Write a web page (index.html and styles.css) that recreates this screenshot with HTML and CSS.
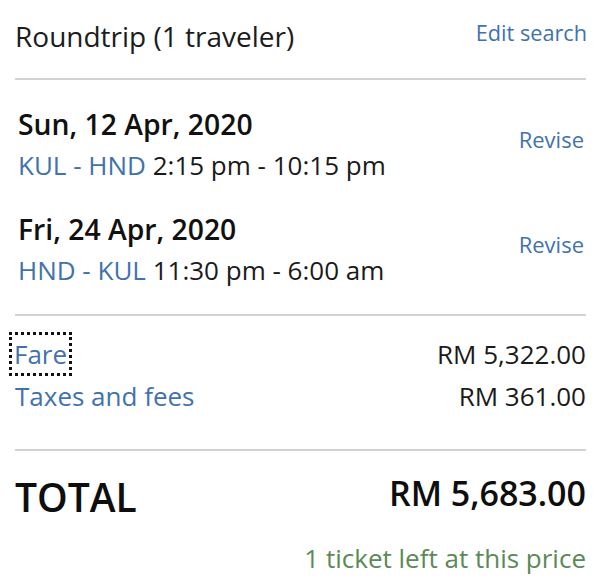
FILE: index.html
```html
<!DOCTYPE html>
<html lang="en">
<head>
<meta charset="utf-8">
<title>Trip summary</title>
<link rel="stylesheet" href="styles.css">
</head>
<body>
<div class="summary">
  <div class="header">
    <h1 class="title">Roundtrip (1 traveler)</h1>
    <a class="edit" href="#">Edit search</a>
  </div>
  <div class="flights">
    <div class="flight">
      <div class="flight-info">
        <div class="date">Sun, 12 Apr, 2020</div>
        <div class="route"><a class="code" href="#">KUL - HND</a> 2:15 pm - 10:15 pm</div>
      </div>
      <a class="revise" href="#">Revise</a>
    </div>
    <div class="flight">
      <div class="flight-info">
        <div class="date">Fri, 24 Apr, 2020</div>
        <div class="route"><a class="code" href="#">HND - KUL</a> 11:30 pm - 6:00 am</div>
      </div>
      <a class="revise" href="#">Revise</a>
    </div>
  </div>
  <div class="prices">
    <div class="price-row">
      <a class="price-link focused" href="#">Fare</a>
      <span class="amount">RM 5,322.00</span>
    </div>
    <div class="price-row second">
      <a class="price-link" href="#">Taxes and fees</a>
      <span class="amount">RM 361.00</span>
    </div>
  </div>
  <div class="total">
    <div class="total-row">
      <span class="total-label">TOTAL</span>
      <span class="total-amount">RM 5,683.00</span>
    </div>
    <div class="availability">1 ticket left at this price</div>
  </div>
</div>
</body>
</html>
```

FILE: styles.css
```css
* { box-sizing: border-box; }

html, body {
  margin: 0;
  padding: 0;
  background: #ffffff;
}

body {
  font-family: "Open Sans", "Noto Sans", sans-serif;
  color: #161616;
}

a {
  text-decoration: none;
  color: #4172ad;
}

.summary {
  padding: 0 14px 0 15px;
}

.header {
  display: flex;
  justify-content: space-between;
  align-items: flex-start;
  padding: 18px 0 24px;
  border-bottom: 2px solid #d2d2d2;
}

.title {
  margin: 0;
  font-size: 28px;
  font-weight: 400;
  line-height: 36px;
  color: #1c1c1c;
}

.edit {
  font-size: 21.7px;
  line-height: 29px;
  margin-right: -1px;
}

.flights {
  padding: 27px 0 27px;
  border-bottom: 2px solid #d2d2d2;
  display: flex;
  flex-direction: column;
  gap: 30px;
}

.flight {
  display: flex;
  justify-content: space-between;
  align-items: center;
  padding: 0 2px 0 3px;
}

.date {
  font-size: 28.3px;
  font-weight: 600;
  line-height: 34px;
  color: #111;
}

.route {
  margin-top: 7px;
  font-size: 26px;
  line-height: 34px;
  color: #1a1a1a;
}

.revise {
  font-size: 22px;
  line-height: 29px;
  padding-bottom: 10px;
}

.prices {
  padding: 21px 0 36px;
  border-bottom: 2px solid #d2d2d2;
}

.price-row {
  display: flex;
  justify-content: space-between;
  align-items: baseline;
  font-size: 26px;
  line-height: 34px;
}

.price-row.second {
  margin-top: 8px;
}

.price-link {
  display: inline-block;
}

.price-link.focused {
  padding: 2px 2px 2px 2px;
  margin: -2px 0 -2px -3px;
  outline: 3px dotted #111;
}

.amount {
  color: #1a1a1a;
}

.total {
  padding-top: 23px;
}

.total-row {
  display: flex;
  justify-content: space-between;
  align-items: flex-start;
}

.total-label {
  font-size: 39px;
  font-weight: 600;
  line-height: 46px;
  color: #0e0e0e;
}

.total-amount {
  font-size: 34px;
  font-weight: 600;
  line-height: 38px;
  color: #0e0e0e;
}

.availability {
  margin-top: 21px;
  text-align: right;
  font-size: 26px;
  line-height: 34px;
  color: #5a8a55;
}
```
